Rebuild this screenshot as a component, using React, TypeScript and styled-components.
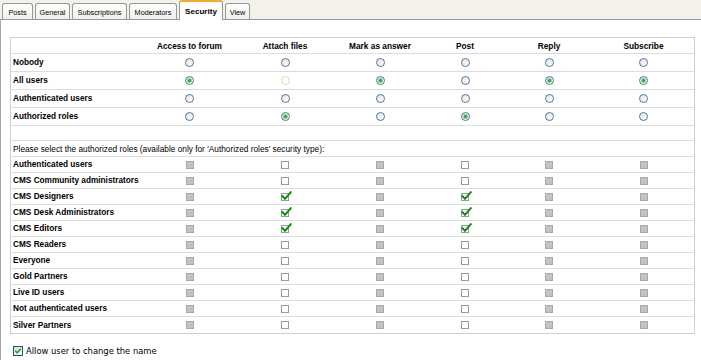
import styled, { createGlobalStyle } from 'styled-components';

const GlobalStyle = createGlobalStyle`
  body {
    margin: 0;
    background: #fff;
    font-family: "Liberation Sans", Arial, sans-serif;
  }
`;

type Access = 'off' | 'on' | 'disabled';

const COLUMNS = ['Access to forum', 'Attach files', 'Mark as answer', 'Post', 'Reply', 'Subscribe'];
const GRID = '133px 91px 100px 90px 80px 88px 101px';

const TABS = [
  { label: 'Posts', width: 31 },
  { label: 'General', width: 35 },
  { label: 'Subscriptions', width: 55 },
  { label: 'Moderators', width: 48 },
  { label: 'Security', width: 44, active: true },
  { label: 'View', width: 25 }
];

const SECURITY_ROWS: { name: string; values: Access[] }[] = [
  { name: 'Nobody', values: ['off', 'off', 'off', 'off', 'off', 'off'] },
  { name: 'All users', values: ['on', 'disabled', 'on', 'off', 'on', 'on'] },
  { name: 'Authenticated users', values: ['off', 'off', 'off', 'off', 'off', 'off'] },
  { name: 'Authorized roles', values: ['off', 'on', 'off', 'on', 'off', 'off'] }
];

const ROLES = [
  'Authenticated users',
  'CMS Community administrators',
  'CMS Designers',
  'CMS Desk Administrators',
  'CMS Editors',
  'CMS Readers',
  'Everyone',
  'Gold Partners',
  'Live ID users',
  'Not authenticated users',
  'Silver Partners'
];

// columns where roles can be picked (Attach files, Post)
const ENABLED_COLS = [1, 3];
const CHECKED_ROLES = ['CMS Designers', 'CMS Desk Administrators', 'CMS Editors'];

const Radio = ({ state }: { state: Access }) => (
  <RadioCircle $state={state}>{state === 'on' && <RadioDot />}</RadioCircle>
);

const RoleBox = ({ enabled, checked }: { enabled: boolean; checked: boolean }) => {
  if (!enabled) return <GreyBox />;
  return (
    <BoxWrap>
      <WhiteBox />
      {checked && (
        <CheckMark width="11" height="10" viewBox="0 0 11 10">
          <path d="M1.5 5.2 L4 7.8 L9.8 1.2" fill="none" stroke="#13880f" strokeWidth="2" strokeLinecap="square" />
        </CheckMark>
      )}
    </BoxWrap>
  );
};

const App = () => {
  return (
    <Page>
      <GlobalStyle />
      <TabStrip>
        {TABS.map((tab) => (
          <Tab key={tab.label} $active={!!tab.active} $width={tab.width}>
            {tab.label}
          </Tab>
        ))}
      </TabStrip>
      <Panel>
        <Table>
          <Row $height={16}>
            <LabelCell />
            {COLUMNS.map((col) => (
              <HeaderCell key={col}>{col}</HeaderCell>
            ))}
          </Row>
          {SECURITY_ROWS.map((row) => (
            <Row key={row.name} $height={18}>
              <LabelCell>{row.name}</LabelCell>
              {row.values.map((v, i) => (
                <Cell key={i}>
                  <Radio state={v} />
                </Cell>
              ))}
            </Row>
          ))}
          <Row $height={15} />
          <NoteRow>Please select the authorized roles (available only for 'Authorized roles' security type):</NoteRow>
          {ROLES.map((role, idx) => (
            <Row key={role} $height={16} $last={idx === ROLES.length - 1}>
              <LabelCell>{role}</LabelCell>
              {COLUMNS.map((col, i) => (
                <Cell key={col}>
                  <RoleBox enabled={ENABLED_COLS.includes(i)} checked={ENABLED_COLS.includes(i) && CHECKED_ROLES.includes(role)} />
                </Cell>
              ))}
            </Row>
          ))}
        </Table>
        <AllowLine>
          <XpCheck>
            <svg width="8" height="8" viewBox="0 0 8 8">
              <path d="M1.2 3.8 L3.2 5.8 L6.8 1.8" fill="none" stroke="#21a121" strokeWidth="1.6" />
            </svg>
          </XpCheck>
          <AllowText>Allow user to change the name</AllowText>
        </AllowLine>
      </Panel>
    </Page>
  );
};

export default App;

const Page = styled.div`
  width: 701px;
  height: 360px;
  display: flex;
  flex-direction: column;
  overflow: hidden;
`;

const TabStrip = styled.div`
  flex: none;
  display: flex;
  align-items: flex-end;
  gap: 2px;
  height: 19px;
  padding-left: 2px;
  background: #f3f1e8;
  border-bottom: 1px solid #919b9c;
`;

const Tab = styled.div<{ $active: boolean; $width: number }>`
  box-sizing: border-box;
  width: ${({ $width }) => $width}px;
  height: ${({ $active }) => ($active ? 20 : 16)}px;
  margin-bottom: ${({ $active }) => ($active ? -1 : 0)}px;
  display: flex;
  align-items: center;
  justify-content: center;
  border: 1px solid #919b9c;
  border-bottom: none;
  border-top: ${({ $active }) => ($active ? '2px solid #f0a830' : '1px solid #919b9c')};
  border-radius: 3px 3px 0 0;
  background: ${({ $active }) => ($active ? '#fff' : 'linear-gradient(#fefefe, #f1f0ea)')};
  font-size: ${({ $active }) => ($active ? '8.1px' : '7.3px')};
  font-weight: ${({ $active }) => ($active ? 'bold' : 'normal')};
  color: #000;
  padding-top: ${({ $active }) => ($active ? 0 : 1)}px;
`;

const Panel = styled.div`
  flex: 1;
  border-left: 1px solid #a0a8aa;
  padding: 17px 0 0 9px;
`;

const Table = styled.div`
  width: 685px;
  box-sizing: border-box;
  border: 1px solid #d0d0d0;
`;

const Row = styled.div<{ $height: number; $last?: boolean }>`
  display: grid;
  grid-template-columns: ${GRID};
  align-items: center;
  box-sizing: border-box;
  height: ${({ $height }) => $height}px;
  border-bottom: ${({ $last }) => ($last ? 'none' : '1px solid #dcdcdc')};
`;

const NoteRow = styled.div`
  box-sizing: border-box;
  height: 16px;
  display: flex;
  align-items: center;
  padding-left: 2px;
  font-size: 8.3px;
  color: #000;
  border-bottom: 1px solid #dcdcdc;
`;

const LabelCell = styled.div`
  padding-left: 2px;
  font-size: 8.25px;
  font-weight: bold;
  color: #000;
  white-space: nowrap;
`;

const HeaderCell = styled.div`
  text-align: center;
  font-size: 8.3px;
  font-weight: bold;
  color: #000;
  white-space: nowrap;
`;

const Cell = styled.div`
  display: flex;
  justify-content: center;
  align-items: center;
`;

const RadioCircle = styled.span<{ $state: Access }>`
  box-sizing: border-box;
  width: 9px;
  height: 9px;
  border-radius: 50%;
  display: flex;
  align-items: center;
  justify-content: center;
  border: 1px solid ${({ $state }) => ($state === 'disabled' ? '#d6d4ca' : '#4f73a6')};
  background: ${({ $state }) => ($state === 'disabled' ? '#fff' : 'linear-gradient(135deg, #e4e4de, #fff)')};
`;

const RadioDot = styled.span`
  width: 3px;
  height: 3px;
  border-radius: 50%;
  background: #1fae1f;
  box-shadow: 0 0 0 1px #8fd48f;
`;

const GreyBox = styled.span`
  box-sizing: border-box;
  width: 8px;
  height: 8px;
  background: #c3c3c3;
  border: 1px solid #a9a9a9;
`;

const BoxWrap = styled.span`
  position: relative;
  display: block;
  width: 8px;
  height: 8px;
`;

const WhiteBox = styled.span`
  box-sizing: border-box;
  display: block;
  width: 8px;
  height: 8px;
  background: #fff;
  border: 1px solid #9a9a9a;
`;

const CheckMark = styled.svg`
  position: absolute;
  left: 0;
  top: -2px;
`;

const AllowLine = styled.div`
  display: flex;
  align-items: center;
  gap: 3px;
  margin-top: 12px;
  padding-left: 3px;
`;

const XpCheck = styled.span`
  box-sizing: border-box;
  width: 10px;
  height: 10px;
  display: flex;
  align-items: center;
  justify-content: center;
  border: 1px solid #1c5180;
  background: linear-gradient(135deg, #dcdcd6, #fff);
`;

const AllowText = styled.span`
  font-family: "DejaVu Sans", Verdana, sans-serif;
  font-size: 8.4px;
  color: #000;
`;
